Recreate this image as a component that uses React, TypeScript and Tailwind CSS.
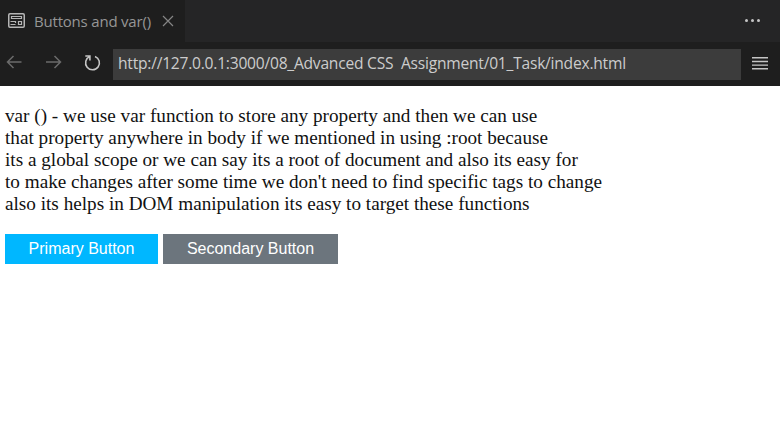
const lines = [
  'var () - we use var function to store any property and then we can use',
  'that property anywhere in body if we mentioned in using :root because',
  'its a global scope or we can say its a root of document and also its easy for',
  "to make changes after some time we don't need to find specific tags to change",
  'also its helps in DOM manipulation its easy to target these functions',
];

export default function App() {
  return (
    <div className="flex h-[427px] w-[780px] flex-col overflow-hidden bg-white">
      <header className="flex h-[42px] shrink-0 bg-[#252526] font-['Open_Sans',sans-serif] text-[#969696]">
        <div className="flex w-[185px] items-center bg-[#1e1e1e] pl-2">
          <svg className="mb-px h-[15px] w-[17px] shrink-0" viewBox="0 0 17 15" fill="none" stroke="#b5b5b5">
            <rect x="0.75" y="0.75" width="15.5" height="13.5" rx="1.2" strokeWidth="1.5" />
            <path d="M3.5 3.5h10v2h-10zM2.5 8.5h5v1.5M2.5 11.5h5M10.5 8.5h3v3h-3z" strokeWidth="1.2" />
          </svg>
          <span className="ml-[9px] w-[117px] text-[15px] tracking-[-0.2px] whitespace-nowrap">Buttons and var()</span>
          <svg className="ml-[11px] mb-px h-3 w-3 shrink-0" viewBox="0 0 12 12" fill="none" stroke="#858585" strokeWidth="1.2"><path d="m1 1 10 10M11 1 1 11" /></svg>
        </div>
        <div className="ml-auto flex items-center gap-[3px] pr-5 pb-px">
          <i className="h-[3px] w-[3px] rounded-full bg-[#c5c5c5]" /><i className="h-[3px] w-[3px] rounded-full bg-[#c5c5c5]" /><i className="h-[3px] w-[3px] rounded-full bg-[#c5c5c5]" />
        </div>
      </header>
      <nav className="flex h-11 shrink-0 items-center bg-[#1e1e1e] pl-1.5">
        <svg className="mb-1 h-4 w-4" viewBox="0 0 16 16" fill="none" stroke="#6b6b6b" strokeWidth="1.5"><path d="M15.5 8H1.5M7.5 2l-6 6 6 6" /></svg>
        <svg className="ml-6 mb-1 h-4 w-4" viewBox="0 0 16 16" fill="none" stroke="#6b6b6b" strokeWidth="1.5"><path d="M0 8h14M8.5 2l6 6-6 6" /></svg>
        <svg className="ml-[22px] mb-1 h-[17px] w-[17px]" viewBox="0 0 17 17" fill="none" stroke="#c5c5c5" strokeWidth="1.6"><path d="M1.3 2h4.6v4.6M5.8 2.5A6.9 6.9 0 1 0 11 2.4" /></svg>
        <div className="ml-3 flex h-[31px] w-[628px] items-center bg-[#3c3c3c] pl-[5px] font-['Open_Sans',sans-serif] text-[15.6px] tracking-[-0.23px] whitespace-pre text-[#cccccc]">http://127.0.0.1:3000/08_Advanced CSS  Assignment/01_Task/index.html</div>
        <svg className="ml-[11px] mb-[3px] h-4 w-4" viewBox="0 0 16 16" fill="none" stroke="#c5c5c5" strokeWidth="1.4"><path d="M0 2.8h16M0 6.5h16M0 10.1h16M0 13.8h16" /></svg>
      </nav>
      <main className="pt-[19px] pl-[5px]">
        <p className="font-['Liberation_Serif',serif] text-[19.2px] leading-[22px] text-[#111111]">
          {lines.map((line) => <span key={line} className="block whitespace-nowrap">{line}</span>)}
        </p>
        <div className="mt-[19px] flex gap-[5px] font-['Liberation_Sans',sans-serif] text-[16px] text-white">
          <button className="h-[30px] w-[153px] bg-[#00b7ff]">Primary Button</button>
          <button className="h-[30px] w-[175px] bg-[#6c757d]">Secondary Button</button>
        </div>
      </main>
    </div>
  );
}
